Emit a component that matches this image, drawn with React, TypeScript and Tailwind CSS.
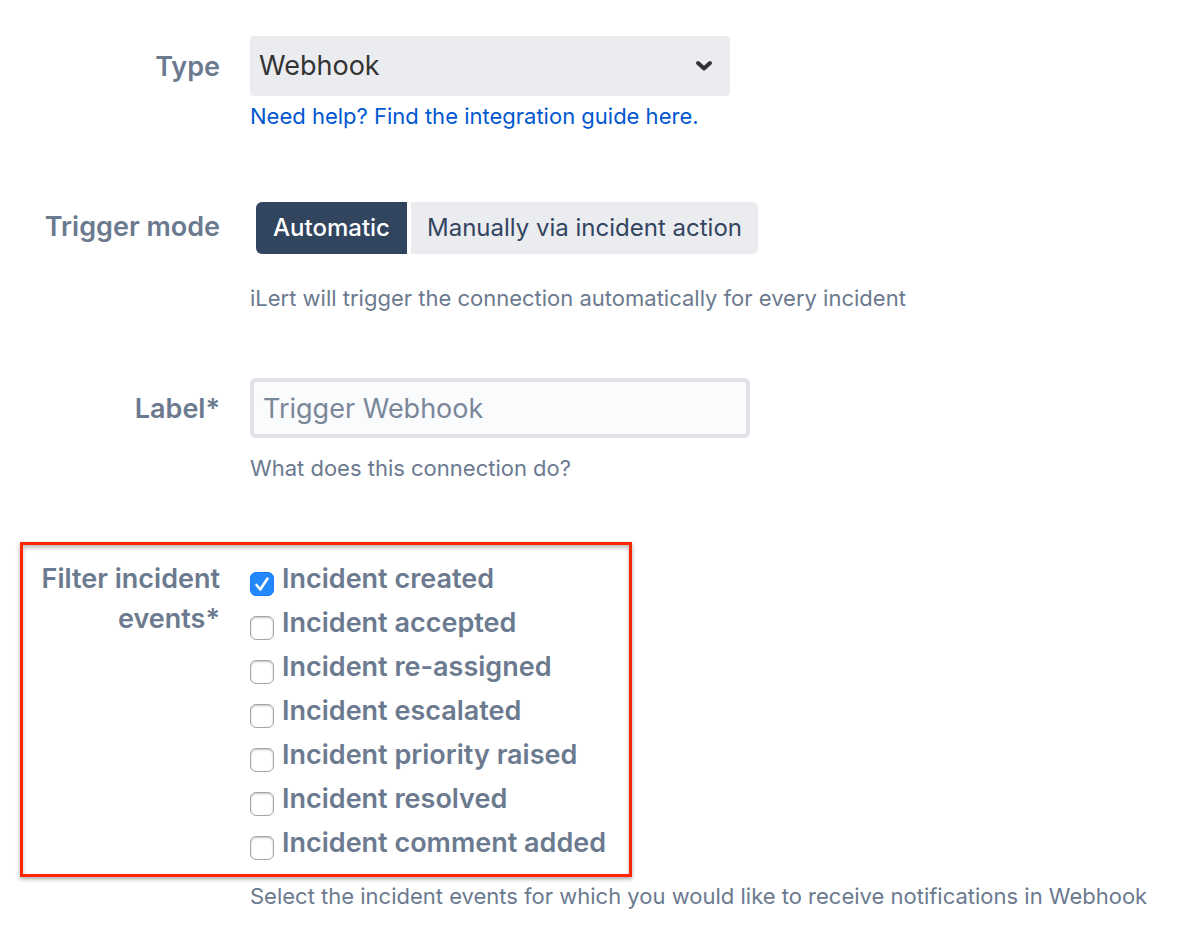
import { useState } from "react";
import type { ReactNode } from "react";

const EVENTS = [
  "Incident created",
  "Incident accepted",
  "Incident re-assigned",
  "Incident escalated",
  "Incident priority raised",
  "Incident resolved",
  "Incident comment added",
];

function Hint({ children }: { children: ReactNode }) {
  return <p className="text-[22px] leading-8 text-[#6b7a8f]">{children}</p>;
}

const labelClass = "w-[188px] shrink-0 text-right text-[27px] leading-10 font-semibold text-[#6b7a8f]";
const modeClass =
  "h-[52px] bg-[#ebecf0] text-[24px] text-[#32455f] aria-pressed:bg-[#32455f] aria-pressed:font-medium aria-pressed:text-white";

export default function App() {
  const [mode, setMode] = useState("auto");
  const [checked, setChecked] = useState<string[]>(["Incident created"]);
  const toggle = (name: string) =>
    setChecked((c) => (c.includes(name) ? c.filter((n) => n !== name) : [...c, name]));

  return (
    <form className="min-h-screen bg-white px-5 pt-9 pb-8 font-['Inter',sans-serif]">
      <div className="flex gap-[30px] pl-3">
        <label htmlFor="type" className={`${labelClass} pt-[11px]`}>Type</label>
        <div className="min-w-0 flex-1">
          <div className="relative w-[480px] max-w-full">
            <select id="type" className="h-[60px] w-full appearance-none rounded bg-[#ebecf0] px-[9px] pt-px text-[27px] text-[#333333]">
              <option>Webhook</option>
            </select>
            <svg className="pointer-events-none absolute top-6 right-[17px]" width="18" height="13" viewBox="0 0 18 13" fill="none">
              <path d="M3 3L9 8.5L15 3" stroke="#333333" strokeWidth="4" strokeLinecap="round" strokeLinejoin="round" />
            </svg>
          </div>
          <a href="#guide" className="mt-1 block text-[22px] leading-8 text-[#0057d0]">Need help? Find the integration guide here.</a>
        </div>
      </div>

      <div className="mt-[70px] flex gap-[30px] pl-3">
        <span id="mode" className={`${labelClass} whitespace-nowrap pt-[5px]`}>Trigger mode</span>
        <div className="min-w-0 flex-1">
          <div role="group" aria-labelledby="mode" className="flex gap-1 pl-[6px]">
            <button type="button" aria-pressed={mode === "auto"} onClick={() => setMode("auto")} className={`${modeClass} w-[151px] rounded-l-md`}>
              Automatic
            </button>
            <button type="button" aria-pressed={mode === "manual"} onClick={() => setMode("manual")} className={`${modeClass} w-[347px] rounded-r-md`}>
              Manually via incident action
            </button>
          </div>
          <div className="mt-7">
            <Hint>iLert will trigger the connection automatically for every incident</Hint>
          </div>
        </div>
      </div>

      <div className="mt-16 flex gap-[30px] pl-3">
        <label htmlFor="label" className={`${labelClass} pt-[11px]`}>Label*</label>
        <div className="min-w-0 flex-1">
          <input id="label" type="text" placeholder="Trigger Webhook" className="block h-[60px] w-[500px] max-w-full rounded-md border-4 border-[#dfe1e6] bg-[#fafbfc] px-[9px] text-[27px] text-[#091e42] placeholder:text-[#7a879a]" />
          <div className="mt-[14px]">
            <Hint>What does this connection do?</Hint>
          </div>
        </div>
      </div>

      <fieldset aria-labelledby="events" className="mt-[58px]">
        <div className="flex w-fit gap-[30px] border-[3px] border-[#ff2600] pt-[14px] pr-[23px] pb-[7px] pl-[9px] shadow-[0_2px_4px_rgba(0,0,0,0.35),inset_0_3px_4px_rgba(0,0,0,0.25)]">
          <span id="events" className={labelClass}>Filter incident events*</span>
          <div className="flex flex-col">
            {EVENTS.map((name) => (
              <label key={name} className="flex h-11 gap-2 text-[27px] leading-10 font-semibold text-[#6b7a8f]">
                <span className="relative mt-[13px] size-6 shrink-0">
                  <input type="checkbox" checked={checked.includes(name)} onChange={() => toggle(name)} className="peer block size-6 appearance-none rounded-md border border-[#a6a6a6] bg-white shadow-[inset_0_1px_2px_rgba(0,0,0,0.25)] checked:border-[#1a7cf5] checked:bg-[#2388fb] checked:shadow-none" />
                  <svg className="pointer-events-none absolute inset-0 hidden peer-checked:block" width="24" height="24" viewBox="0 0 24 24" fill="none">
                    <path d="M6.5 13L10.3 17.5L17.5 6.5" stroke="white" strokeWidth="2.6" strokeLinecap="round" strokeLinejoin="round" />
                  </svg>
                </span>
                {name}
              </label>
            ))}
          </div>
        </div>
        <div className="mt-[3px] pl-[230px]">
          <Hint>Select the incident events for which you would like to receive notifications in Webhook</Hint>
        </div>
      </fieldset>
    </form>
  );
}
